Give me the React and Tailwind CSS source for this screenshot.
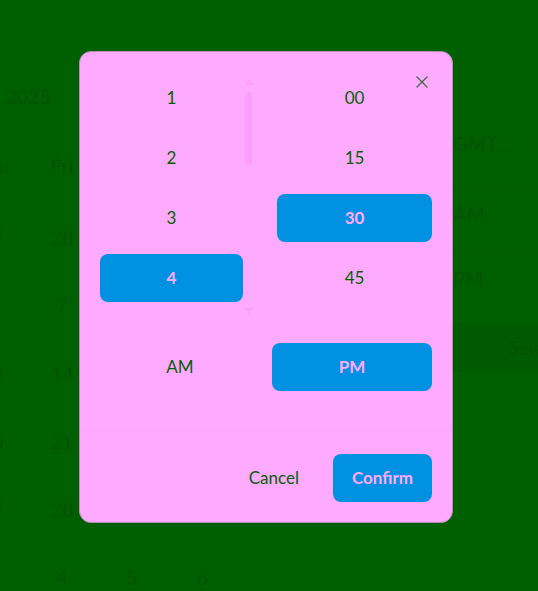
import { useState } from "react";
import { X, ChevronDown } from "lucide-react";

const hours = [1, 2, 3, 4, 5, 6, 7, 8, 9, 10, 11, 12];
const minutes = ["00", "15", "30", "45"];

const weekDays = ["Mon", "Tue", "Wed", "Thu", "Fri", "Sat", "Sun"];
const weeks = [
  [24, 25, 26, 27, 28, 1, 2],
  [3, 4, 5, 6, 7, 8, 9],
  [10, 11, 12, 13, 14, 15, 16],
  [17, 18, 19, 20, 21, 22, 23],
  [24, 25, 26, 27, 28, 29, 30],
  [31, 1, 2, 3, 4, 5, 6],
];

function Background() {
  return (
    <div className="flex h-full text-[#005400]">
      {/* calendar behind the dialog */}
      <div className="w-[453px] shrink-0">
        <p className="pl-[5px] pt-[82px] text-xl leading-7">2025</p>
        <div className="ml-[-253px] mt-[41px] grid grid-cols-[repeat(7,70px)] text-xl">
          {weekDays.map((d) => (
            <div key={d} className="h-[72px] text-center leading-7">
              {d}
            </div>
          ))}
          {weeks.flat().map((d, i) => (
            <div key={i} className="h-[68px] text-center leading-7">
              {d}
            </div>
          ))}
        </div>
      </div>

      {/* time list behind the dialog */}
      <div className="flex-1 pt-[129px] text-xl">
        <div className="flex h-[56px] items-start gap-3">
          <span className="leading-7">GMT...</span>
          <ChevronDown size={14} className="mt-2" />
        </div>
        <div className="h-[65px] border-t border-[#005b00] pt-[13px] leading-7">AM</div>
        <div className="h-[65px] border-t border-[#005b00] pt-[13px] leading-7">PM</div>
        <div className="mt-[7px] flex h-[50px] items-center bg-[#005a00] pl-[55px] leading-7">
          Select
        </div>
      </div>
    </div>
  );
}

function Option({ active, onClick, children }) {
  return (
    <button
      onClick={onClick}
      className={
        active
          ? "h-12 w-full shrink-0 rounded-lg bg-[#0091e2] text-[17px] font-bold text-[#ffaaff]"
          : "h-12 w-full shrink-0 rounded-lg text-[17px] text-[#046004]"
      }
    >
      {children}
    </button>
  );
}

function ScrollBar() {
  return (
    <div className="flex w-[11px] shrink-0 flex-col items-center">
      <div className="mt-[5px] h-0 w-0 border-x-[4px] border-b-[6px] border-x-transparent border-b-[#fa9ffa]" />
      <div className="mt-[7px] h-[73px] w-[7px] rounded-full bg-[#fa9ffa]" />
      <div className="flex-1" />
      <div className="mb-[4px] h-0 w-0 border-x-[4px] border-t-[6px] border-x-transparent border-t-[#fa9ffa]" />
    </div>
  );
}

export default function App() {
  const [hour, setHour] = useState(4);
  const [minute, setMinute] = useState("30");
  const [period, setPeriod] = useState("PM");

  return (
    <div className="relative h-[591px] w-full overflow-hidden bg-[#005f00] font-['Lato',sans-serif]">
      <Background />

      {/* DIALOG */}
      <div className="absolute inset-0 flex pl-[79px] pt-[51px]">
        <div className="relative h-fit w-[374px] rounded-xl border border-[#b98db9] bg-[#feaafe]">
          <button className="absolute right-5 top-5 text-[#3f6b4a]">
            <X size={20} strokeWidth={1.5} />
          </button>

          <div className="px-5 pb-10 pt-[22px]">
            <div className="flex gap-[23px]">
              <div className="flex h-[244px] w-[154px]">
                <div className="flex-1 overflow-y-auto [scrollbar-width:none]">
                  <div className="flex flex-col gap-3">
                    {hours.map((h) => (
                      <Option key={h} active={h === hour} onClick={() => setHour(h)}>
                        {h}
                      </Option>
                    ))}
                  </div>
                </div>
                <ScrollBar />
              </div>
              <div className="flex flex-1 flex-col gap-3">
                {minutes.map((m) => (
                  <Option key={m} active={m === minute} onClick={() => setMinute(m)}>
                    {m}
                  </Option>
                ))}
              </div>
            </div>

            <div className="mt-[25px] grid grid-cols-2 gap-3">
              {["AM", "PM"].map((p) => (
                <Option key={p} active={p === period} onClick={() => setPeriod(p)}>
                  {p}
                </Option>
              ))}
            </div>
          </div>

          <div className="flex justify-end gap-[18px] border-t border-[#fca8fc] px-5 pb-5 pt-[22px]">
            <button className="h-12 px-4 text-[17px] text-[#046004]">Cancel</button>
            <button className="h-12 rounded-lg bg-[#0091e2] px-[19px] text-[17px] font-bold text-[#ffaaff]">
              Confirm
            </button>
          </div>
        </div>
      </div>
    </div>
  );
}
